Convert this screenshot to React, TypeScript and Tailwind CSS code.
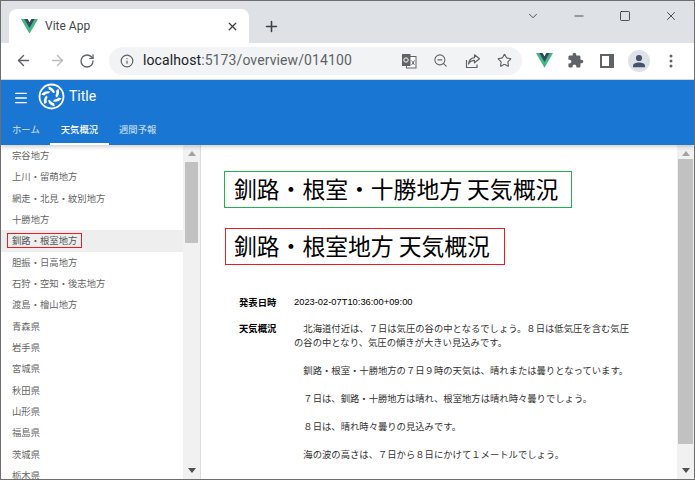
import React from "react";
import { ArrowLeft, ArrowRight, RotateCw, Info, X, Plus, ChevronDown, Minus, Square, ZoomOut, Star, Menu } from "lucide-react";

const cjk = { fontFamily: '"Noto Sans CJK JP", sans-serif' } as const;

const VueLogo = ({ size }: { size: number }) => (
  <svg width={size} height={size * 0.87} viewBox="0 0 256 221" className="shrink-0">
    <path fill="#41B883" d="M204.8 0H256L128 220.8 0 0h97.9L128 51.2 157.4 0z" />
    <path fill="#35495E" d="M50.2 0L128 134.4 205.1 0h-47.7L128 51.2 97.9 0z" />
  </svg>
);

const TitleLogo = () => (
  <svg width="27" height="27" viewBox="0 0 27 27" className="shrink-0">
    <circle cx="13.5" cy="13.5" r="12" fill="none" stroke="#fff" strokeWidth="1.8" />
    {[0, 60, 120, 180, 240, 300].map((a) => (
      <path key={a} transform={`rotate(${a} 13.5 13.5)`} d="M10.2 3.6 Q15.6 4.4 17 9.6 L15.1 9.9 Q13.6 7.2 10.8 6.6 Z" fill="#fff" />
    ))}
  </svg>
);

const Translate = () => (
  <svg width="16" height="16" viewBox="0 0 16 16" className="shrink-0">
    <rect x="5.5" y="3.5" width="9.5" height="11.5" fill="#fff" stroke="#5f6368" />
    <path d="M1 1h8.5v12H1z" fill="#5f6368" />
    <circle cx="5" cy="7" r="2.2" fill="none" stroke="#fff" strokeWidth="1" />
    <path d="M10.5 7.5l3 4.5M13.5 7.5l-3 4.5" stroke="#5f6368" strokeWidth="0.9" />
  </svg>
);

const ShareIcon = () => (
  <svg width="16" height="16" viewBox="0 0 16 16" fill="none" stroke="#5f6368" strokeWidth="1.2" className="shrink-0">
    <path d="M1.5 7v7.5H12v-3" />
    <path d="M9.5 1.8l5 4-5 4V7.4C7 7.4 5 8.3 3.6 11c.3-3.6 2.4-6 5.9-6.4z" strokeLinejoin="round" />
  </svg>
);

const PuzzleIcon = () => (
  <svg width="17" height="17" viewBox="0 0 24 24" fill="#5f6368" className="shrink-0">
    <path d="M20.5 11H19V7c0-1.1-.9-2-2-2h-4V3.5C13 2.12 11.88 1 10.5 1S8 2.12 8 3.5V5H4c-1.1 0-1.99.9-1.99 2v3.8H3.5c1.49 0 2.7 1.21 2.7 2.7s-1.21 2.7-2.7 2.7H2V20c0 1.1.9 2 2 2h3.8v-1.5c0-1.49 1.21-2.7 2.7-2.7 1.49 0 2.7 1.21 2.7 2.7V22H17c1.1 0 2-.9 2-2v-4h1.5c1.38 0 2.5-1.12 2.5-2.5S21.88 11 20.5 11z" />
  </svg>
);

const DotsIcon = () => (
  <svg width="16" height="16" viewBox="0 0 16 16" fill="#5f6368" className="shrink-0">
    <circle cx="8" cy="3" r="1.5" />
    <circle cx="8" cy="8" r="1.5" />
    <circle cx="8" cy="13" r="1.5" />
  </svg>
);

const PanelIcon = () => (
  <svg width="14" height="14" viewBox="0 0 14 14" className="shrink-0">
    <path d="M0 0h14v14H0z" fill="#5f6368" />
    <path d="M2 2h7v10H2z" fill="#fff" />
  </svg>
);

const Avatar = () => (
  <div className="flex h-[22px] w-[22px] items-center justify-center rounded-full bg-[#dee1e6]">
    <svg width="14" height="14" viewBox="0 0 14 14" fill="#45526b">
      <circle cx="7" cy="4" r="3.1" />
      <path d="M1 13.2v-1.5C1 9.6 4.2 8.5 7 8.5s6 1.1 6 3.2v1.5z" />
    </svg>
  </div>
);

const ScrollArrow = ({ down }: { down?: boolean }) => (
  <div className="flex h-[17px] items-center justify-center">
    <svg width="8" height="5" viewBox="0 0 8 5" fill={down ? "#505050" : "#a3a3a3"}>
      <path d={down ? "M0 0h8L4 5z" : "M0 5h8L4 0z"} />
    </svg>
  </div>
);

const areas = ["宗谷地方", "上川・留萌地方", "網走・北見・紋別地方", "十勝地方", "釧路・根室地方", "胆振・日高地方", "石狩・空知・後志地方", "渡島・檜山地方", "青森県", "岩手県", "宮城県", "秋田県", "山形県", "福島県", "茨城県", "栃木県"];

const paragraphs = [
  "　北海道付近は、７日は気圧の谷の中となるでしょう。８日は低気圧を含む気圧の谷の中となり、気圧の傾きが大きい見込みです。",
  "　釧路・根室・十勝地方の７日９時の天気は、晴れまたは曇りとなっています。",
  "　７日は、釧路・十勝地方は晴れ、根室地方は晴れ時々曇りでしょう。",
  "　８日は、晴れ時々曇りの見込みです。",
  "　海の波の高さは、７日から８日にかけて１メートルでしょう。",
];

export default function App() {
  return (
    <div className="flex h-[480px] w-[695px] flex-col overflow-hidden border border-[#6e6e6e] bg-white" style={cjk}>
      {/* tab strip */}
      <div className="flex h-[42px] shrink-0 items-end bg-[#dee1e6] pl-[8px]">
        <div className="flex h-[34px] w-[240px] items-center rounded-t-[8px] bg-white pl-[12px] pr-[10px]">
          <VueLogo size={17} />
          <span className="ml-[7px] flex-1 text-[12px] text-[#45474a]" style={{ fontFamily: "Roboto, sans-serif" }}>Vite App</span>
          <X size={13} strokeWidth={2.4} className="text-[#3c4043]" />
        </div>
        <div className="mb-[8px] ml-[13px] flex h-[18px] w-[18px] items-center justify-center">
          <Plus size={17} strokeWidth={2.2} className="text-[#3c4043]" />
        </div>
        <div className="mb-[20px] ml-auto flex items-center gap-[32px] pr-[16px] text-[#111]">
          <ChevronDown size={14} strokeWidth={1.2} />
          <Minus size={14} strokeWidth={1.2} />
          <Square size={12} strokeWidth={1.4} className="mx-[1px]" />
          <X size={14} strokeWidth={1.2} />
        </div>
      </div>
      {/* toolbar */}
      <div className="flex h-[37px] shrink-0 items-center border-b border-[#dadce0] bg-white pb-[1px]">
        <ArrowLeft size={17} strokeWidth={2} className="ml-[14px] text-[#5f6368]" />
        <ArrowRight size={17} strokeWidth={2} className="ml-[17px] text-[#babcbe]" />
        <RotateCw size={16} strokeWidth={2} className="ml-[13px] text-[#5f6368]" />
        <div className="ml-[14px] flex h-[28px] w-[413px] items-center rounded-full bg-[#f1f3f4] pl-[11px]">
          <Info size={14} strokeWidth={2} className="text-[#5f6368]" />
          <span className="ml-[9px] w-[250px] text-[14px] text-[#202124]" style={{ fontFamily: "Roboto, sans-serif", letterSpacing: "0.1px" }}>
            <span className="text-[#202124]">localhost</span><span className="text-[#5f6368]">:5173/overview/014100</span>
          </span>
          <div className="ml-auto flex items-center gap-[16px] pr-[10px]">
            <Translate />
            <ZoomOut size={15} strokeWidth={1.7} className="mr-[1px] text-[#5f6368]" />
            <ShareIcon />
            <Star size={15} strokeWidth={1.8} className="text-[#5f6368]" />
          </div>
        </div>
        <div className="ml-[14px]"><VueLogo size={17} /></div>
        <div className="ml-[14px]"><PuzzleIcon /></div>
        <div className="ml-[16px]"><PanelIcon /></div>
        <div className="ml-[14px]"><Avatar /></div>
        <div className="ml-[13px]"><DotsIcon /></div>
      </div>
      {/* app bar */}
      <div className="z-10 flex h-[65px] shrink-0 flex-col bg-[#1976d2] text-white shadow-[0_2px_4px_rgba(0,0,0,0.18)]">
        <div className="flex h-[33px] items-center pl-[12px]">
          <Menu size={16} strokeWidth={2} className="mt-[2px] text-white" />
          <div className="ml-[9px]"><TitleLogo /></div>
          <span className="mb-[2px] ml-[4px] text-[14px] leading-none" style={{ fontFamily: "Roboto, sans-serif" }}>Title</span>
        </div>
        <div className="flex h-[32px] text-[9.33px] font-medium">
          <div className="flex items-center pl-[11px] pr-[10px] text-white/70">ホーム</div>
          <div className="flex items-center border-b-2 border-white px-[11px] pt-[2px] text-white">天気概況</div>
          <div className="flex items-center pl-[10px] pr-[11px] text-white/70">週間予報</div>
        </div>
      </div>
      {/* body */}
      <div className="flex min-h-0 flex-1">
        <div className="flex w-[182px] shrink-0 flex-col overflow-hidden text-[9.33px] text-[#666]">
          {areas.map((a, i) =>
            i === 4 ? (
              <div key={a} className="flex h-[21.33px] shrink-0 items-center bg-[#eeeeee] pl-[6px]">
                <div className="bg-[#ed1c24] p-px">
                  <div className="bg-[#eeeeee] px-[4px] leading-[13px] text-[#555]">{a}</div>
                </div>
              </div>
            ) : (
              <div key={a} className="flex h-[21.33px] shrink-0 items-center pl-[11px] leading-[13px]">
                <span>{a}</span>
              </div>
            )
          )}
        </div>
        <div className="flex w-[17px] shrink-0 flex-col bg-[#f1f1f1] px-[2px]">
          <ScrollArrow />
          <div className="h-[81px] bg-[#c1c1c1]" />
          <div className="flex-1" />
          <ScrollArrow down />
        </div>
        <div className="w-px shrink-0 bg-[#dddddd]" />
        <div className="min-w-0 flex-1 overflow-hidden pl-[23px] pt-[26px]">
          <div className="flex h-[37px] w-[348px] items-center border border-[#22b14c] pl-[9px] text-[22.8px] leading-none text-black">釧路・根室・十勝地方 天気概況</div>
          <div className="ml-[1px] mt-[20px] flex h-[37px] w-[280px] items-center border border-[#ed1c24] pl-[8px] text-[22.8px] leading-none text-black">釧路・根室地方 天気概況</div>
          <div className="ml-[15px] mt-[30px] grid grid-cols-[55px_336px] gap-y-[12px] text-[9.33px] leading-[14px] text-[#333]">
            <div className="font-bold text-black">発表日時</div>
            <div className="text-black" style={{ fontFamily: '"Liberation Sans", sans-serif' }}>2023-02-07T10:36:00+09:00</div>
            <div className="font-bold text-black">天気概況</div>
            <div className="flex flex-col gap-[14px] whitespace-pre-wrap">
              {paragraphs.map((p) => (
                <p key={p}>{p}</p>
              ))}
            </div>
          </div>
        </div>
        <div className="flex w-[17px] shrink-0 flex-col bg-[#f1f1f1] px-[1px]">
          <ScrollArrow />
          <div className="mt-[-3px] h-[285px] bg-[#c1c1c1]" />
          <div className="flex-1" />
          <ScrollArrow down />
        </div>
      </div>
    </div>
  );
}
